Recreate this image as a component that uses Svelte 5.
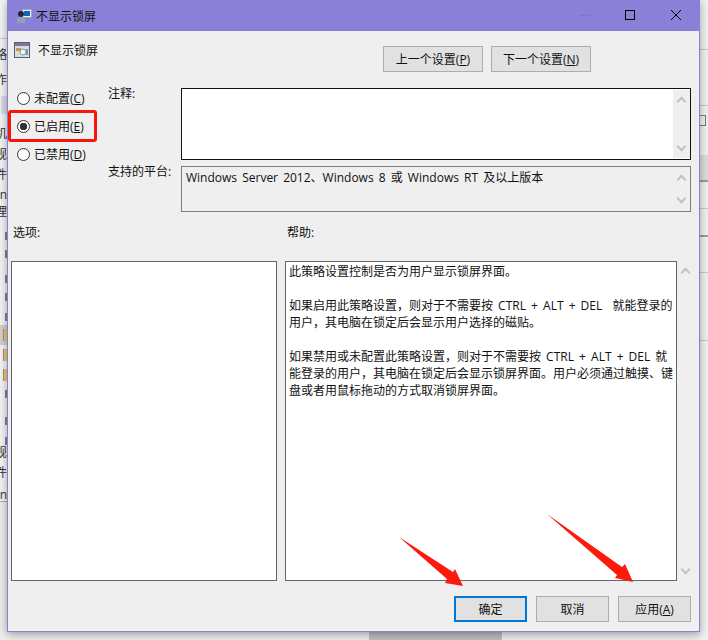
<script>
	const helpParagraphs = [
		"此策略设置控制是否为用户显示锁屏界面。",
		"如果启用此策略设置，则对于不需要按 CTRL + ALT + DEL  就能登录的用户，其电脑在锁定后会显示用户选择的磁贴。",
		"如果禁用或未配置此策略设置，则对于不需要按 CTRL + ALT + DEL 就能登录的用户，其电脑在锁定后会显示锁屏界面。用户必须通过触摸、键盘或者用鼠标拖动的方式取消锁屏界面。"
	];

	const radios = [
		{ label: "未配置", key: "C", checked: false },
		{ label: "已启用", key: "E", checked: true },
		{ label: "已禁用", key: "D", checked: false }
	];

	// parts of the window behind the dialog that still show on its left edge
	const behind = [
		{ t: "略", y: 48 },
		{ t: "作", y: 73 },
		{ t: "机", y: 127 },
		{ t: "规", y: 148 },
		{ t: "件", y: 168 },
		{ t: "n", y: 188 },
		{ t: "理", y: 205 },
		{ t: "规", y: 446 },
		{ t: "件", y: 466 },
		{ t: "n", y: 488 }
	];
	const ticks = [232, 250, 275, 293, 313, 390, 417, 437];
</script>

<div class="desk">
	<div class="behind-left">
		<i class="rule" style="top: 38px"></i>
		<i class="tool" style="top: 96px"></i>
		{#each behind as b}
			<span class="frag" style="top: {b.y}px">{b.t}</span>
		{/each}
		{#each ticks as y}
			<i class="tick" style="top: {y}px"></i>
		{/each}
		<i class="folder sel" style="top: 329px"></i>
		<i class="folder" style="top: 349px"></i>
		<i class="folder" style="top: 369px"></i>
	</div>

	<div class="window">
		<div class="titlebar">
			<svg class="title-icon" viewBox="0 0 16 16" width="16" height="16">
				<rect x="6.500" y="1.500" width="9" height="8" fill="#e8eef4" stroke="#9aa7b4" />
				<rect x="8" y="3" width="6" height="5" fill="#1a5fc4" />
				<circle cx="5" cy="6" r="3" fill="#23282e" />
				<path d="M1 15v-3.500q0-2.500 4-2.500t4 2.500v3.500z" fill="#8fa3b8" />
			</svg>
			<span class="title-text">不显示锁屏</span>
			<div class="caption">
				<svg viewBox="0 0 46 31" width="46" height="31"><path d="M19 15.500h10" stroke="#7f78bd" /></svg>
				<svg viewBox="0 0 46 31" width="46" height="31"><rect x="18.500" y="10.500" width="9" height="9" fill="none" stroke="#000" /></svg>
				<svg viewBox="0 0 46 31" width="46" height="31"><path d="M18 10l10 10M28 10l-10 10" stroke="#000" fill="none" /></svg>
			</div>
		</div>

		<div class="body">
			<div class="head">
				<div class="policy">
					<svg viewBox="0 0 16 16" width="16" height="16">
						<rect x="0.500" y="0.500" width="15" height="15" fill="#d9dde0" stroke="#4d6670" />
						<rect x="1" y="1" width="14" height="3" fill="#8a6fa0" />
						<rect x="2" y="6" width="5" height="3" fill="#c79a4a" />
						<circle cx="9" cy="10" r="3" fill="#f4f4f4" stroke="#8a979c" />
						<rect x="12" y="7" width="2" height="6" fill="#7f9aa5" />
					</svg>
					<span>不显示锁屏</span>
				</div>
				<div class="nav">
					<button class="btn nav-btn">上一个设置(<u>P</u>)</button>
					<button class="btn nav-btn">下一个设置(<u>N</u>)</button>
				</div>
			</div>

			<div class="config">
				<div class="radios">
					{#each radios as r}
						<div class="radio-row">
							<span class="radio" class:on={r.checked}></span>
							<span>{r.label}(<u>{r.key}</u>)</span>
						</div>
					{/each}
				</div>
				<div class="fields">
					<div class="field comment">
						<span class="field-label">注释:</span>
						<div class="box dark">
							<div class="box-fill"></div>
							<div class="scroll"><i class="up"></i><i class="down"></i></div>
						</div>
					</div>
					<div class="field platform">
						<span class="field-label">支持的平台:</span>
						<div class="box grey">
							<div class="box-fill platform-text">Windows Server 2012、Windows 8 或 Windows RT 及以上版本</div>
							<div class="scroll"><i class="up"></i><i class="down"></i></div>
						</div>
					</div>
				</div>
			</div>

			<div class="labels">
				<span class="left-col">选项:</span>
				<span>帮助:</span>
			</div>

			<div class="panes">
				<div class="options"></div>
				<div class="help">
					{#each helpParagraphs as p}
						<p>{p}</p>
					{/each}
				</div>
				<div class="scroll help-scroll"><i class="up"></i><i class="down"></i></div>
			</div>

			<div class="actions">
				<button class="btn act primary">确定</button>
				<button class="btn act">取消</button>
				<button class="btn act">应用(<u>A</u>)</button>
			</div>
		</div>
	</div>

	<div class="behind-right">
		<i class="rule" style="top: 49px"></i>
		<i class="rule" style="top: 105px"></i>
		<i class="check" style="top: 115px"></i>
		<i class="band" style="top: 155px"></i>
		<i class="rule dark" style="top: 180px"></i>
		<i class="rule" style="top: 208px"></i>
		<i class="rule dark" style="top: 235px"></i>
		<i class="rule" style="top: 272px"></i>
		<i class="rule" style="top: 340px"></i>
	</div>

	<!-- annotations drawn on top of the screenshot -->
	<div class="mark"></div>
	<svg class="arrows" viewBox="0 0 708 640" width="708" height="640">
		<path d="M399 537L453 572L455 569L463 586L445 583L447 579Z" fill="#fb1a0c" />
		<path d="M547 514L622 567L625 564L633 582L615 578L617 575Z" fill="#fb1a0c" />
	</svg>
</div>

<style>
	:global(body) {
		margin: 0;
	}

	.desk {
		position: relative;
		width: 708px;
		height: 640px;
		overflow: hidden;
		display: flex;
		align-items: flex-start;
		background: linear-gradient(90deg, #ececec 0 369px, #bdbdbd 369px 502px, #ececec 502px);
		font-family: "Open Sans", "Noto Sans CJK SC", sans-serif;
		font-size: 12px;
		color: #111;
	}

	.behind-left {
		position: relative;
		width: 7px;
		height: 501px;
		flex: none;
		overflow: hidden;
		background: #f3f3f3;
		border-bottom: 1px solid #aaa;
	}

	.frag {
		position: absolute;
		right: 0;
		line-height: 14px;
		white-space: nowrap;
		color: #333;
	}

	.tool {
		position: absolute;
		left: 1px;
		right: 0;
		height: 18px;
		background: #d5dae2;
	}

	.tick {
		position: absolute;
		left: 5px;
		width: 2px;
		height: 8px;
		background: #5a4a66;
		opacity: 0.7;
	}

	.folder {
		position: absolute;
		left: 3px;
		width: 4px;
		height: 12px;
		background: #e6c877;
		border-left: 1px solid #a89258;
	}

	.folder.sel {
		box-shadow: 0 0 0 4px #cfcfcf;
	}

	.behind-right {
		position: relative;
		width: 8px;
		height: 640px;
		flex: none;
		background: #f0f0f0;
	}

	.rule {
		position: absolute;
		left: 0;
		right: 0;
		height: 1px;
		background: #c8c8c8;
	}

	.rule.dark {
		height: 2px;
		background: #9a9a9a;
	}

	.band {
		position: absolute;
		left: 0;
		right: 0;
		height: 25px;
		background: #dcdcdc;
	}

	.check {
		position: absolute;
		left: 0;
		width: 5px;
		height: 9px;
		border: 1px solid #777;
		border-left: 0;
	}

	.window {
		width: 693px;
		height: 632px;
		flex: none;
		box-sizing: border-box;
		display: flex;
		flex-direction: column;
		background: #efefef;
		border: solid #8a80d8;
		border-width: 0 1px 1px 1px;
		box-shadow: 0 2px 8px rgba(0, 0, 0, 0.35);
		z-index: 1;
	}

	.titlebar {
		height: 31px;
		flex: none;
		display: flex;
		align-items: center;
		background: #8a80d8;
		padding-left: 8px;
	}

	.title-text {
		margin-left: 4px;
		font-size: 12px;
	}

	.caption {
		margin-left: auto;
		display: flex;
	}

	.caption svg {
		display: block;
	}

	.body {
		flex: 1;
		min-height: 0;
		display: flex;
		flex-direction: column;
		padding: 0 8px 10px 3px;
	}

	.head {
		height: 41px;
		flex: none;
		display: flex;
		align-items: flex-start;
	}

	.policy {
		display: flex;
		align-items: center;
		gap: 8px;
		margin-left: 3px;
		margin-top: 10px;
	}

	.nav {
		display: flex;
		gap: 8px;
		margin-left: auto;
		margin-top: 15px;
		margin-right: 100px;
	}

	.btn {
		box-sizing: border-box;
		height: 26px;
		padding: 0;
		font: inherit;
		color: #111;
		background: #e1e1e1;
		border: 1px solid #adadad;
	}

	.nav-btn {
		width: 100px;
	}

	.config {
		display: flex;
		height: 140px;
		flex: none;
	}

	.radios {
		width: 97px;
		flex: none;
		padding-top: 12px;
		padding-left: 6px;
		box-sizing: border-box;
	}

	.radio-row {
		display: flex;
		align-items: center;
		gap: 4px;
		height: 28px;
	}

	.radio {
		box-sizing: border-box;
		width: 13px;
		height: 13px;
		border: 1px solid #333;
		border-radius: 50%;
		background: #fff;
	}

	.radio.on {
		background: radial-gradient(circle, #333 0 3.500px, #fff 4px);
	}

	.fields {
		flex: 1;
		display: flex;
		flex-direction: column;
		gap: 6px;
		padding-top: 16px;
	}

	.field {
		display: flex;
	}

	.comment {
		height: 72px;
		flex: none;
	}

	.platform {
		height: 46px;
		flex: none;
	}

	.field-label {
		width: 73px;
		flex: none;
		line-height: 12px;
	}

	.box {
		flex: 1;
		display: flex;
		box-sizing: border-box;
		border: 1px solid #666;
	}

	.box.dark {
		border-color: #111;
		background: #fff;
	}

	.box.grey {
		border-color: #7d7d7d;
		background: #efefef;
	}

	.box-fill {
		flex: 1;
	}

	.platform-text {
		padding: 1px 4px;
		word-spacing: 2px;
	}

	.scroll {
		width: 17px;
		flex: none;
		background: #efefef;
		position: relative;
		margin: 1px 0;
	}

	.scroll i {
		position: absolute;
		left: 5px;
		width: 7px;
		height: 7px;
		border: solid #c2c2c2;
		border-width: 2px 0 0 2px;
		transform: rotate(45deg);
		box-sizing: border-box;
	}

	.scroll .up {
		top: 8px;
	}

	.scroll .down {
		bottom: 8px;
		transform: rotate(225deg);
	}

	.labels {
		height: 49px;
		flex: none;
		display: flex;
		align-items: flex-start;
		padding-top: 14px;
		box-sizing: border-box;
		line-height: 14px;
	}

	.left-col {
		width: 276px;
		flex: none;
		padding-left: 2px;
		box-sizing: border-box;
	}

	.panes {
		height: 320px;
		flex: none;
		display: flex;
	}

	.options {
		box-sizing: border-box;
		width: 266px;
		background: #fff;
		border: 1px solid #666;
		flex: none;
	}

	.help {
		box-sizing: border-box;
		flex: 1;
		margin-left: 8px;
		background: #fff;
		border: 1px solid #666;
		padding: 1px 3px;
		line-height: 17px;
		white-space: pre-wrap;
		word-spacing: 2px;
	}

	.help p {
		margin: 0 0 17px;
	}

	.help-scroll {
		margin: 0;
		width: 14px;
	}

	.actions {
		margin-top: 15px;
		display: flex;
		justify-content: flex-end;
		gap: 9px;
	}

	.act {
		width: 73px;
	}

	.primary {
		border: 2px solid #0078d7;
	}

	.mark {
		position: absolute;
		left: 8px;
		top: 110px;
		width: 89px;
		height: 32px;
		box-sizing: border-box;
		border: 3px solid #f5160c;
		border-radius: 3px;
		z-index: 2;
	}

	.arrows {
		position: absolute;
		left: 0;
		top: 0;
		pointer-events: none;
		z-index: 2;
	}
</style>
